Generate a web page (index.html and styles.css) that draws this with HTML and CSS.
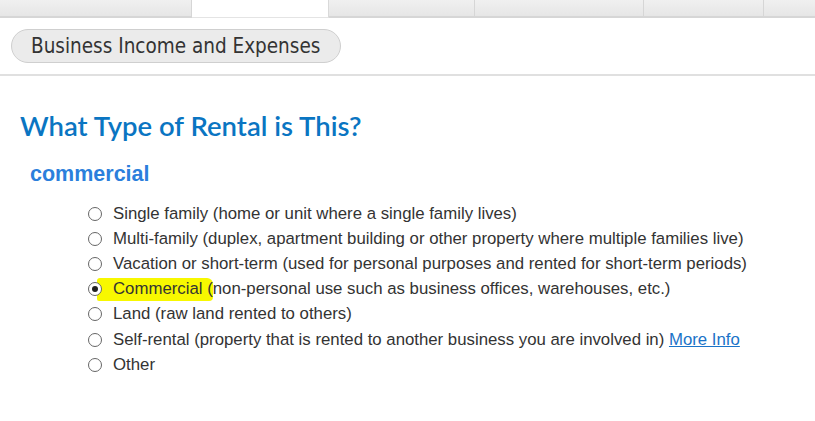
FILE: index.html
```html
<!DOCTYPE html>
<html>
<head>
<meta charset="utf-8">
<link rel="stylesheet" href="styles.css">
</head>
<body>
<div class="tabs">
  <div class="tab t1"></div>
  <div class="tab active t2"></div>
  <div class="tab t3"></div>
  <div class="tab t4"></div>
  <div class="tab t5"></div>
  <div class="tab t6"></div>
</div>
<div class="crumbbar">
  <span class="pill">Business Income and Expenses</span>
</div>
<div class="content">
  <h1 class="title">What Type of Rental is This?</h1>
  <h2 class="subtitle">commercial</h2>
  <ul class="options">
    <li><span class="radio"></span><span>Single family (home or unit where a single family lives)</span></li>
    <li><span class="radio"></span><span>Multi-family (duplex, apartment building or other property where multiple families live)</span></li>
    <li><span class="radio"></span><span>Vacation or short-term (used for personal purposes and rented for short-term periods)</span></li>
    <li class="hl-row"><span class="mark"></span><span class="radio checked"></span><span>Commercial (non-personal use such as business offices, warehouses, etc.)</span></li>
    <li><span class="radio"></span><span>Land (raw land rented to others)</span></li>
    <li><span class="radio"></span><span>Self-rental (property that is rented to another business you are involved in) <a class="more" href="#">More Info</a></span></li>
    <li><span class="radio"></span><span>Other</span></li>
  </ul>
</div>
</body>
</html>
```
FILE: styles.css
```css
html, body {
  margin: 0;
  padding: 0;
  background: #fff;
}
body {
  font-family: "Liberation Sans", Arial, sans-serif;
  color: #333;
}
.tabs {
  display: flex;
  height: 18px;
}
.tab {
  box-sizing: border-box;
  height: 18px;
  background: linear-gradient(#f0f0f0, #e6e6e6);
  border-right: 1px solid #d6d6d6;
  border-bottom: 2px solid #d6d6d6;
}
.tab.active {
  background: #fff;
  border-bottom: 1px solid #e4e4e4;
  border-right: 1px solid #d9d9d9;
}
.t1 { width: 192px; }
.t2 { width: 137px; }
.t3 { width: 146px; }
.t4 { width: 169px; }
.t5 { width: 120px; }
.t6 { flex: 1; border-right: none; }
.crumbbar {
  padding: 11px 0 11px 11px;
  border-bottom: 2px solid #e0e0e0;
}
.pill {
  display: inline-flex;
  align-items: center;
  box-sizing: border-box;
  height: 34px;
  width: 330px;
  padding: 0 10px 1px 19px;
  border: 1px solid #cfcfcf;
  border-radius: 17px;
  background: #ebebeb;
  font-family: "DejaVu Sans", sans-serif;
  font-stretch: condensed;
  font-size: 20.5px;
  white-space: nowrap;
  color: #333;
}
.content {
  padding: 35px 0 0 20px;
}
.title {
  margin: 0;
  font-family: Lato, "Open Sans", sans-serif;
  font-weight: 600;
  font-size: 27.5px;
  line-height: 30px;
  color: #0a75c2;
}
.subtitle {
  margin: 21px 0 0 10px;
  font-family: "Liberation Sans", Arial, sans-serif;
  font-weight: bold;
  font-size: 21.5px;
  line-height: 24px;
  color: #2b7fdc;
}
.options {
  list-style: none;
  margin: 15px 0 0 0;
  padding: 0 0 0 68px;
}
.options li {
  position: relative;
  display: flex;
  align-items: center;
  height: 25.2px;
  font-size: 16.8px;
}
.radio {
  box-sizing: border-box;
  width: 14px;
  height: 14px;
  border: 1px solid #666;
  border-radius: 50%;
  background: #fff;
  margin-right: 11px;
  flex: none;
  position: relative;
  z-index: 1;
}
.radio.checked::after {
  content: "";
  position: absolute;
  left: 3px;
  top: 3px;
  width: 6px;
  height: 6px;
  border-radius: 50%;
  background: #222;
}
.options li > span:last-child {
  position: relative;
  z-index: 1;
}
.mark {
  position: absolute;
  left: 9px;
  top: 1px;
  width: 116px;
  height: 23px;
  background: #f8f800;
  border-radius: 3px 6px 4px 2px;
  z-index: 0;
}
.more {
  color: #1a73c8;
  text-decoration: underline;
}
```
